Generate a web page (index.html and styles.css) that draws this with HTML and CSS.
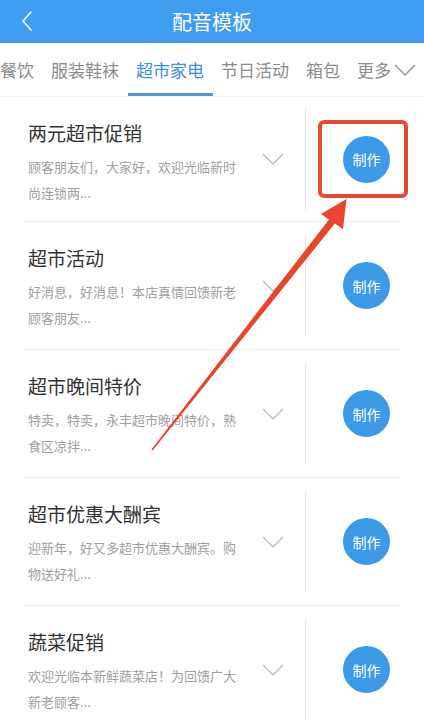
FILE: index.html
```html
<!DOCTYPE html>
<html lang="zh-CN">
<head>
<meta charset="utf-8">
<title>配音模板</title>
<link rel="stylesheet" href="styles.css">
</head>
<body>
<div class="page">
  <header class="topbar">
    <svg class="back" width="14" height="22" viewBox="0 0 14 22"><path d="M11 2 L3 11 L11 20" fill="none" stroke="#fff" stroke-width="1.6" stroke-linecap="round" stroke-linejoin="round"/></svg>
    <h1 class="title">配音模板</h1>
  </header>
  <nav class="tabs">
    <span class="tab">餐饮</span>
    <span class="tab">服装鞋袜</span>
    <span class="tab active">超市家电</span>
    <span class="tab">节日活动</span>
    <span class="tab">箱包</span>
    <span class="tab more">更多<svg width="24" height="14" viewBox="0 0 24 14"><path d="M2 2 L12 12 L22 2" fill="none" stroke="#9a9a9a" stroke-width="1.5"/></svg></span>
  </nav>
  <ul class="list">
    <li class="row">
      <div class="info"><div class="name">两元超市促销</div><p class="desc">顾客朋友们，大家好，欢迎光临新时尚连锁两...</p></div>
      <svg class="chev" width="22" height="12" viewBox="0 0 22 12"><path d="M1 1 L11 11 L21 1" fill="none" stroke="#bdbdbd" stroke-width="1.4"/></svg>
      <span class="divider"></span>
      <button class="make">制作</button>
    </li>
    <li class="row">
      <div class="info"><div class="name">超市活动</div><p class="desc">好消息，好消息！本店真情回馈新老顾客朋友...</p></div>
      <svg class="chev" width="22" height="12" viewBox="0 0 22 12"><path d="M1 1 L11 11 L21 1" fill="none" stroke="#bdbdbd" stroke-width="1.4"/></svg>
      <span class="divider"></span>
      <button class="make">制作</button>
    </li>
    <li class="row">
      <div class="info"><div class="name">超市晚间特价</div><p class="desc">特卖，特卖，永丰超市晚间特价，熟食区凉拌...</p></div>
      <svg class="chev" width="22" height="12" viewBox="0 0 22 12"><path d="M1 1 L11 11 L21 1" fill="none" stroke="#bdbdbd" stroke-width="1.4"/></svg>
      <span class="divider"></span>
      <button class="make">制作</button>
    </li>
    <li class="row">
      <div class="info"><div class="name">超市优惠大酬宾</div><p class="desc">迎新年，好又多超市优惠大酬宾。购物送好礼...</p></div>
      <svg class="chev" width="22" height="12" viewBox="0 0 22 12"><path d="M1 1 L11 11 L21 1" fill="none" stroke="#bdbdbd" stroke-width="1.4"/></svg>
      <span class="divider"></span>
      <button class="make">制作</button>
    </li>
    <li class="row">
      <div class="info"><div class="name">蔬菜促销</div><p class="desc">欢迎光临本新鲜蔬菜店！为回馈广大新老顾客...</p></div>
      <svg class="chev" width="22" height="12" viewBox="0 0 22 12"><path d="M1 1 L11 11 L21 1" fill="none" stroke="#bdbdbd" stroke-width="1.4"/></svg>
      <span class="divider"></span>
      <button class="make">制作</button>
    </li>
  </ul>
  <div class="highlight"></div>
  <svg class="pointer" width="424" height="720" viewBox="0 0 424 720"><polygon points="151.4,449.6 329,219.4 321,214 346.5,199 343,229 334.8,223.6 152.6,450.4" fill="#e8452c"/></svg>
</div>
</body>
</html>
```
FILE: styles.css
```css
* { box-sizing: border-box; }
html, body { margin: 0; padding: 0; background: #fff; }
body { font-family: "Noto Sans CJK SC", "Noto Sans", sans-serif; overflow: hidden; }
.page { position: relative; width: 424px; height: 720px; overflow: hidden; }

.topbar { height: 43px; background: #3f9cf1; display: flex; align-items: center; justify-content: center; position: relative; }
.back { position: absolute; left: 20px; top: 10px; }
.title { margin: 0; color: #fff; font-size: 20px; font-weight: 400; line-height: 1; }

.tabs { height: 54px; display: flex; align-items: stretch; margin-left: -8.5px; white-space: nowrap; border-bottom: 1px solid #f2f2f2; }
.tab { padding: 2px 8.5px 0; font-size: 17px; color: #8c8c8c; display: flex; align-items: center; border-bottom: 3px solid transparent; }
.tab.active { color: #3a8ee6; border-bottom-color: #5b94d2; }
.tab.more { padding-right: 0; }
.tab.more svg { margin-left: 2px; margin-top: 2px; }

.list { list-style: none; margin: 0; padding: 0 24px; }
.row { height: 128px; display: flex; align-items: center; border-bottom: 1px solid #ececec; }
.row:first-child { height: 125px; }
.info { width: 238px; padding-left: 4px; align-self: flex-start; padding-top: 24px; }
.name { font-size: 19px; line-height: 24px; color: #333; }
.desc { margin: 9px 0 0; width: 210px; font-size: 13px; line-height: 26px; color: #a0a0a0; }
.chev { flex: none; }
.divider { width: 1px; height: 103px; background: #e6e6e6; margin-left: 21px; }
.make { width: 47px; height: 47px; margin-left: 37px; border: 0; border-radius: 50%; background: #3d9ae9; color: #fff; font-family: inherit; font-size: 14px; padding: 0; }

.highlight { position: absolute; left: 318px; top: 120px; width: 90px; height: 78px; border: 4px solid #e44a2f; border-radius: 6px; }
.pointer { position: absolute; left: 0; top: 0; }
```
